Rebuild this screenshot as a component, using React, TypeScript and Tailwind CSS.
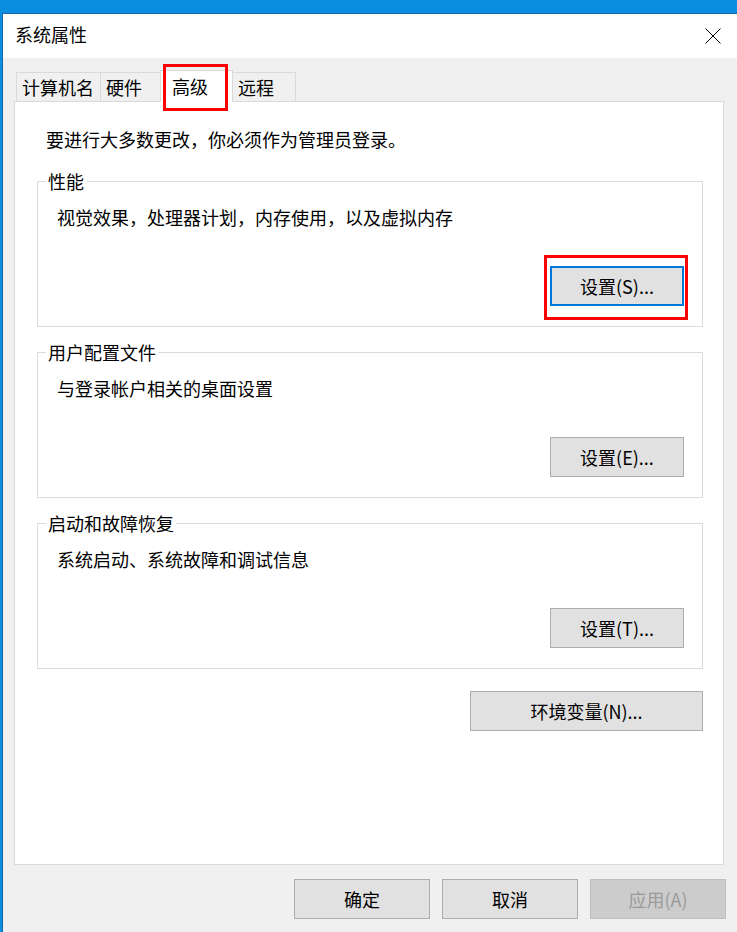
import React from "react";

const font = { fontFamily: '"Noto Sans CJK SC", "Noto Sans", sans-serif' };

function Btn({
  label,
  w,
  focused,
  disabled,
}: {
  label: string;
  w: string;
  focused?: boolean;
  disabled?: boolean;
}) {
  const base = "h-[40px] flex items-center justify-center text-[18px] leading-[24px] box-border ";
  const style = disabled
    ? "bg-[#cccccc] border border-[#bfbfbf] text-[#9a9a9a]"
    : focused
    ? "bg-[#e1e1e1] border-2 border-[#0078d7] text-black"
    : "bg-[#e1e1e1] border border-[#adadad] text-black";
  return <div className={base + style + " " + w}>{label}</div>;
}

function Group({
  title,
  text,
  btn,
  focused,
  className,
}: {
  title: string;
  text: string;
  btn: string;
  focused?: boolean;
  className: string;
}) {
  return (
    <div className={"relative border border-[#dcdcdc] h-[146px] w-[666px] flex flex-col pt-[23px] pl-[19px] pr-[18px] " + className}>
      <span className="absolute left-[8px] top-[-13px] bg-white px-[2px] text-[18px] leading-[24px] text-black">
        {title}
      </span>
      <div className="text-[18px] leading-[24px] text-black">{text}</div>
      <div className="self-end mt-[37px] relative">
        <Btn label={btn} w="w-[134px]" focused={focused} />
        {focused && (
          <div className="absolute left-[-6px] top-[-11px] w-[144px] h-[65px] border-[3px] border-[#ff0000]" />
        )}
      </div>
    </div>
  );
}

export default function App() {
  return (
    <div className="w-[737px] h-[932px] overflow-hidden bg-[#0a8ee0] pt-[13px] pl-[2px]" style={font}>
      <div className="w-[735px] h-[919px] border-l border-t border-[#1b64a8] bg-[#f0f0f0] flex flex-col">
        {/* title bar */}
        <div className="h-[44px] bg-white flex items-center justify-between pl-[12px] pr-[16px]">
          <span className="text-[18px] leading-[24px] text-black relative top-[-2px]">系统属性</span>
          <svg width="16" height="16" viewBox="0 0 16 16">
            <path d="M0.5 0.5 L15.5 15.5 M15.5 0.5 L0.5 15.5" stroke="#000" strokeWidth="1" fill="none" />
          </svg>
        </div>

        {/* tabs */}
        <div className="pt-[14px]">
          <div className="ml-[13px] h-[29px] flex items-end relative z-10">
            <div className="h-[29px] w-[84px] border-l border-t border-[#d9d9d9] pl-[5px] flex items-center text-[18px] leading-[24px] text-black">
              计算机名
            </div>
            <div className="h-[29px] w-[62px] border-l border-t border-[#d9d9d9] pl-[5px] flex items-center text-[18px] leading-[24px] text-black">
              硬件
            </div>
            <div className="relative z-20 h-[32px] w-[73px] -ml-[2px] -mr-[2px] -mb-px bg-white border-l border-t border-r border-[#d9d9d9] pl-[11px] pb-[2px] flex items-center text-[18px] leading-[24px] text-black">
              高级
              <div className="absolute left-[2px] top-[-7px] w-[65px] h-[47px] border-[3px] border-[#ff0000]" />
            </div>
            <div className="h-[29px] w-[65px] border-t border-r border-[#d9d9d9] pl-[7px] flex items-center text-[18px] leading-[24px] text-black">
              远程
            </div>
          </div>

          {/* panel */}
          <div className="ml-[11px] w-[710px] h-[764px] bg-white border border-[#d9d9d9] flex flex-col pt-[25px]">
            <div className="pl-[31px] text-[18px] leading-[24px] text-black">
              要进行大多数更改，你必须作为管理员登录。
            </div>
            <Group
              className="ml-[22px] mt-[30px]"
              title="性能"
              text="视觉效果，处理器计划，内存使用，以及虚拟内存"
              btn="设置(S)..."
              focused
            />
            <Group
              className="ml-[22px] mt-[25px]"
              title="用户配置文件"
              text="与登录帐户相关的桌面设置"
              btn="设置(E)..."
            />
            <Group
              className="ml-[22px] mt-[25px]"
              title="启动和故障恢复"
              text="系统启动、系统故障和调试信息"
              btn="设置(T)..."
            />
            <div className="mt-[22px] self-end mr-[20px]">
              <Btn label="环境变量(N)..." w="w-[233px]" />
            </div>
          </div>
        </div>

        {/* bottom buttons */}
        <div className="mt-[14px] flex justify-end pr-[11px] gap-[12px]">
          <Btn label="确定" w="w-[136px]" />
          <Btn label="取消" w="w-[136px]" />
          <Btn label="应用(A)" w="w-[136px]" disabled />
        </div>
      </div>
    </div>
  );
}
